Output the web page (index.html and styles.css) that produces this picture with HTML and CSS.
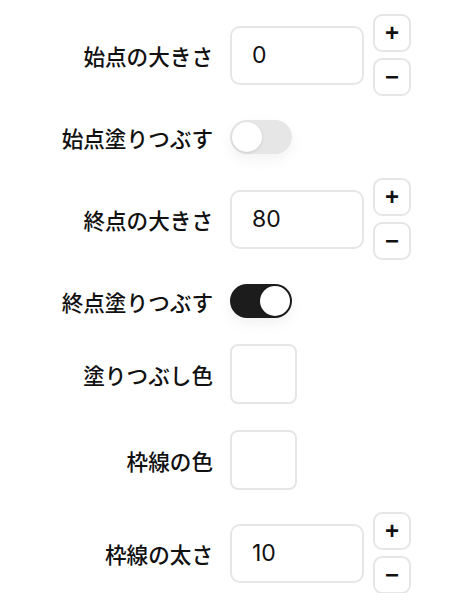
FILE: index.html
```html
<!DOCTYPE html>
<html lang="ja">
<head>
    <meta charset="UTF-8">
    <title>マーカー設定</title>
    <link rel="stylesheet" href="styles.css">
</head>
<body>

<div class="form">
    <div class="row row-num">
        <label class="label">始点の大きさ</label>
        <input class="num" type="text" value="0">
        <div class="stepper">
            <button class="step">+</button>
            <button class="step">&minus;</button>
        </div>
    </div>

    <div class="row row-toggle">
        <label class="label">始点塗りつぶす</label>
        <div class="toggle"><span class="knob"></span></div>
    </div>

    <div class="row row-num">
        <label class="label">終点の大きさ</label>
        <input class="num" type="text" value="80">
        <div class="stepper">
            <button class="step">+</button>
            <button class="step">&minus;</button>
        </div>
    </div>

    <div class="row row-toggle">
        <label class="label">終点塗りつぶす</label>
        <div class="toggle on"><span class="knob"></span></div>
    </div>

    <div class="row row-color">
        <label class="label">塗りつぶし色</label>
        <div class="swatch"></div>
    </div>

    <div class="row row-color">
        <label class="label">枠線の色</label>
        <div class="swatch"></div>
    </div>

    <div class="row row-num">
        <label class="label">枠線の太さ</label>
        <input class="num" type="text" value="10">
        <div class="stepper">
            <button class="step">+</button>
            <button class="step">&minus;</button>
        </div>
    </div>
</div>

</body>
</html>
```

FILE: styles.css
```css
body {
    margin: 0;
    background-color: #fff;
    color: #111;
    font-family: "Noto Sans CJK JP", "Noto Sans", sans-serif;
}
.form {
    display: flex;
    flex-direction: column;
    gap: 20px;
    padding-top: 13px;
}
.row {
    display: flex;
    align-items: center;
}
.row-num {
    height: 84px;
}
.row-toggle {
    height: 40px;
}
.row-color {
    height: 66px;
}
.row-num:last-child {
    height: 80px;
}
.label {
    width: 213px;
    margin-right: 17px;
    text-align: right;
    font-size: 21.6px;
    font-weight: 500;
    white-space: nowrap;
}
.num {
    box-sizing: border-box;
    width: 134px;
    height: 59px;
    padding: 0 0 0 20px;
    border: 2px solid #e6e6e6;
    border-radius: 10px;
    font-family: Inter, "Liberation Sans", sans-serif;
    font-size: 23px;
    color: #111;
    outline: none;
}
.stepper {
    display: flex;
    flex-direction: column;
    gap: 6px;
    margin-left: 9px;
}
.step {
    box-sizing: border-box;
    width: 38px;
    height: 38px;
    padding: 0;
    border: 2px solid #e6e6e6;
    border-radius: 9px;
    background-color: #fff;
    font-family: "Liberation Sans", sans-serif;
    font-size: 24px;
    font-weight: 700;
    line-height: 1;
    color: #111;
}
.toggle {
    box-sizing: border-box;
    width: 62px;
    height: 34px;
    padding: 2px;
    border-radius: 17px;
    background-color: #e6e6e6;
    box-shadow: 0 6px 14px rgba(0, 0, 0, 0.05);
}
.toggle .knob {
    display: block;
    width: 30px;
    height: 30px;
    border-radius: 50%;
    background-color: #fff;
    box-shadow: 0 1px 3px rgba(0, 0, 0, 0.12);
}
.toggle.on {
    background-color: #1c1c1c;
}
.toggle.on .knob {
    margin-left: 28px;
}
.swatch {
    box-sizing: border-box;
    width: 67px;
    height: 60px;
    border: 2px solid #e6e6e6;
    border-radius: 8px;
    background-color: #fff;
}
```
